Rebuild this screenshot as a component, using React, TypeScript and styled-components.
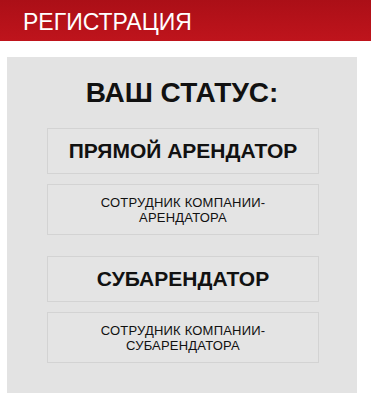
import styled, { createGlobalStyle } from "styled-components";

const GlobalStyle = createGlobalStyle`
  body {
    margin: 0;
    background: #ffffff;
    font-family: "Liberation Sans", Arial, sans-serif;
  }
`;

const Header = styled.header`
  height: 41px;
  box-sizing: border-box;
  padding: 9px 0 0 23px;
  background: linear-gradient(#ab0f17, #bf141c);
  color: #ffffff;
  font-size: 23px;
  line-height: 27px;
`;

const Panel = styled.section`
  margin: 16px 0 0 7px;
  width: 350px;
  height: 336px;
  box-sizing: border-box;
  padding: 20px 0 0;
  background: #e3e3e3;
  display: flex;
  flex-direction: column;
  align-items: center;
`;

const Title = styled.h2`
  margin: 0 0 19px;
  font-size: 28px;
  line-height: 32px;
  font-weight: bold;
  color: #111111;
`;

const Option = styled.button<{ $main?: boolean; $gapTop?: number }>`
  width: 272px;
  height: ${(p) => (p.$main ? 46 : 51)}px;
  margin: ${(p) => p.$gapTop ?? 0}px 0 0 2px;
  box-sizing: border-box;
  background: #e4e4e4;
  border: 1px solid #d3d3d3;
  border-radius: 0;
  font-family: inherit;
  color: #111111;
  font-size: ${(p) => (p.$main ? 21 : 13)}px;
  font-weight: ${(p) => (p.$main ? "bold" : "normal")};
  letter-spacing: ${(p) => (p.$main ? 0 : 0.2)}px;
  line-height: ${(p) => (p.$main ? 24 : 15)}px;
  padding: 0;
  cursor: pointer;
  display: flex;
  align-items: center;
  justify-content: center;
  text-align: center;
`;

export default function App() {
  return (
    <>
      <GlobalStyle />
      <Header>РЕГИСТРАЦИЯ</Header>
      <Panel>
        <Title>ВАШ СТАТУС:</Title>
        <Option $main>ПРЯМОЙ АРЕНДАТОР</Option>
        <Option $gapTop={10}>
          СОТРУДНИК КОМПАНИИ-
          <br />
          АРЕНДАТОРА
        </Option>
        <Option $main $gapTop={21}>
          СУБАРЕНДАТОР
        </Option>
        <Option $gapTop={10}>
          СОТРУДНИК КОМПАНИИ-
          <br />
          СУБАРЕНДАТОРА
        </Option>
      </Panel>
    </>
  );
}
